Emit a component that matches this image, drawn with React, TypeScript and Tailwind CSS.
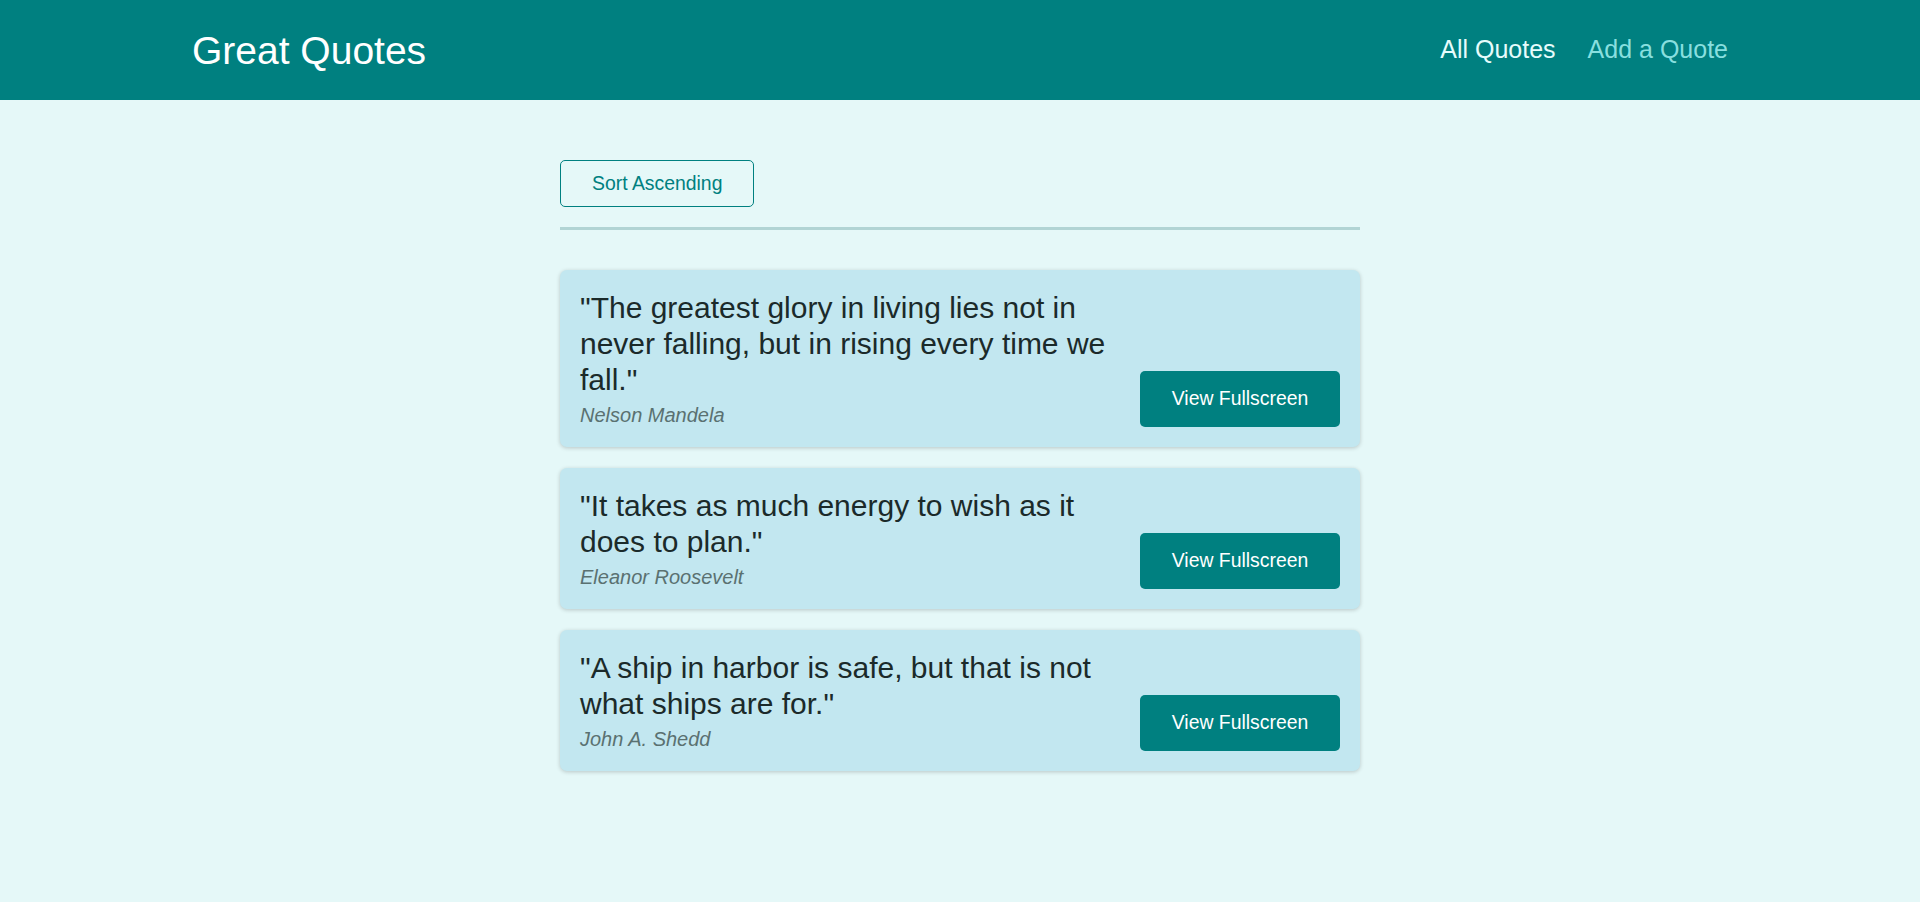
import React from "react";

const quotes = [
  {
    id: "q1",
    text: "The greatest glory in living lies not in never falling, but in rising every time we fall.",
    author: "Nelson Mandela",
  },
  {
    id: "q2",
    text: "It takes as much energy to wish as it does to plan.",
    author: "Eleanor Roosevelt",
  },
  {
    id: "q3",
    text: "A ship in harbor is safe, but that is not what ships are for.",
    author: "John A. Shedd",
  },
];

const App = () => {
  return (
    <div
      className="min-h-[902px] bg-[#e5f8f8]"
      style={{ fontFamily: "'Liberation Sans', Arial, sans-serif" }}
    >
      {/* top bar */}
      <header className="flex h-[100px] w-full items-center justify-between bg-[#008080] px-[10%]">
        <div className="text-[39px] leading-none text-white">Great Quotes</div>
        <nav className="flex items-center gap-[32px] text-[25px]">
          <a className="text-[#e6fcfc]">All Quotes</a>
          <a className="text-[#88dfdf]">Add a Quote</a>
        </nav>
      </header>

      <main className="mx-auto mt-[60px] w-[800px]">
        {/* sorting */}
        <div className="border-b-[3px] border-[#b1d4d4] pb-[20px]">
          <button className="h-[47px] rounded-[5px] border border-[#008080] px-[31px] text-[19.4px] text-[#008080]">
            Sort Ascending
          </button>
        </div>

        {/* list */}
        <ul className="mt-[40px] flex flex-col gap-[21px]">
          {quotes.map((q) => (
            <QuoteItem key={q.id} text={q.text} author={q.author} />
          ))}
        </ul>
      </main>
    </div>
  );
};

export default App;

const QuoteItem = ({ text, author }: { text: string; author: string }) => {
  return (
    <li className="flex items-end justify-between rounded-[7px] bg-[#c2e7f0] p-[20px] shadow-[0_1px_4px_rgba(0,0,0,0.2)]">
      <figure className="min-w-0 flex-1">
        <blockquote className="text-[30px] leading-[36px] text-[#1b2a2a]">
          <p>"{text}"</p>
        </blockquote>
        <figcaption className="mt-[5px] text-[20px] leading-[24px] italic text-[#5a7171]">
          {author}
        </figcaption>
      </figure>
      <a className="flex h-[56px] w-[200px] shrink-0 items-center justify-center whitespace-nowrap rounded-[5px] bg-[#008080] text-[19.4px] text-white">
        View Fullscreen
      </a>
    </li>
  );
};
